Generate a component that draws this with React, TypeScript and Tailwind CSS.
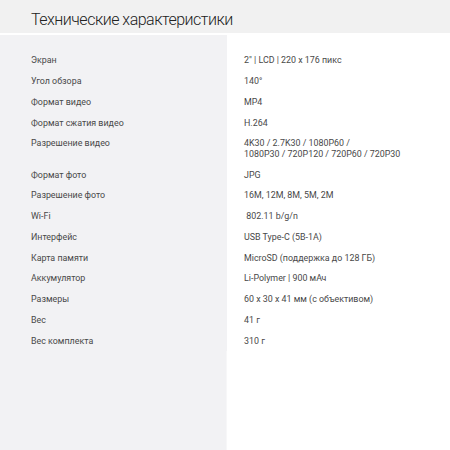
const specs: { label: string; value: string[] }[] = [
  { label: "Экран", value: ["2\" | LCD | 220 x 176 пикс"] },
  { label: "Угол обзора", value: ["140°"] },
  { label: "Формат видео", value: ["MP4"] },
  { label: "Формат сжатия видео", value: ["H.264"] },
  {
    label: "Разрешение видео",
    value: ["4K30 / 2.7K30 / 1080P60 /", "1080P30 / 720P120 / 720P60 / 720P30"],
  },
  { label: "Формат фото", value: ["JPG"] },
  { label: "Разрешение фото", value: ["16M, 12M, 8M, 5M, 2M"] },
  { label: "Wi-Fi", value: ["\u00a0802.11 b/g/n"] },
  { label: "Интерфейс", value: ["USB Type-C (5В-1А)"] },
  { label: "Карта памяти", value: ["MicroSD (поддержка до 128 ГБ)"] },
  { label: "Аккумулятор", value: ["Li-Polymer | 900 мАч"] },
  { label: "Размеры", value: ["60 x 30 x 41 мм (с объективом)"] },
  { label: "Вес", value: ["41 г"] },
  { label: "Вес комплекта", value: ["310 г"] },
];

export default function App() {
  return (
    <div className="w-[450px] h-[450px] bg-white flex flex-col overflow-hidden font-['Roboto','Liberation_Sans',sans-serif]">
      <header className="h-[33px] bg-[#f1f1f1] pl-[31px] pt-[10px]">
        <h1 className="text-[16px] leading-[20px] tracking-[-0.5px] font-light text-[#222]">
          Технические характеристики
        </h1>
      </header>

      <div className="mt-[2px] flex-1 flex flex-col">
        <div className="flex">
          <div className="w-[227px] h-[15px] bg-[#f2f2f4]" />
        </div>

        {specs.map((row) => (
          <div key={row.label} className="flex text-[8.9px] leading-[10.4px] text-[#484848]">
            <div className="w-[227px] shrink-0 bg-[#f2f2f4] pl-[31px] py-[5.2px]">
              {row.label}
            </div>
            <div className="pl-[17px] py-[5.2px]">
              {row.value.map((line) => (
                <div key={line}>{line}</div>
              ))}
            </div>
          </div>
        ))}

        <div className="flex-1 flex">
          <div className="w-[227px] bg-[#f2f2f4] border-r border-[#f7f7f8]" />
        </div>
      </div>
    </div>
  );
}
